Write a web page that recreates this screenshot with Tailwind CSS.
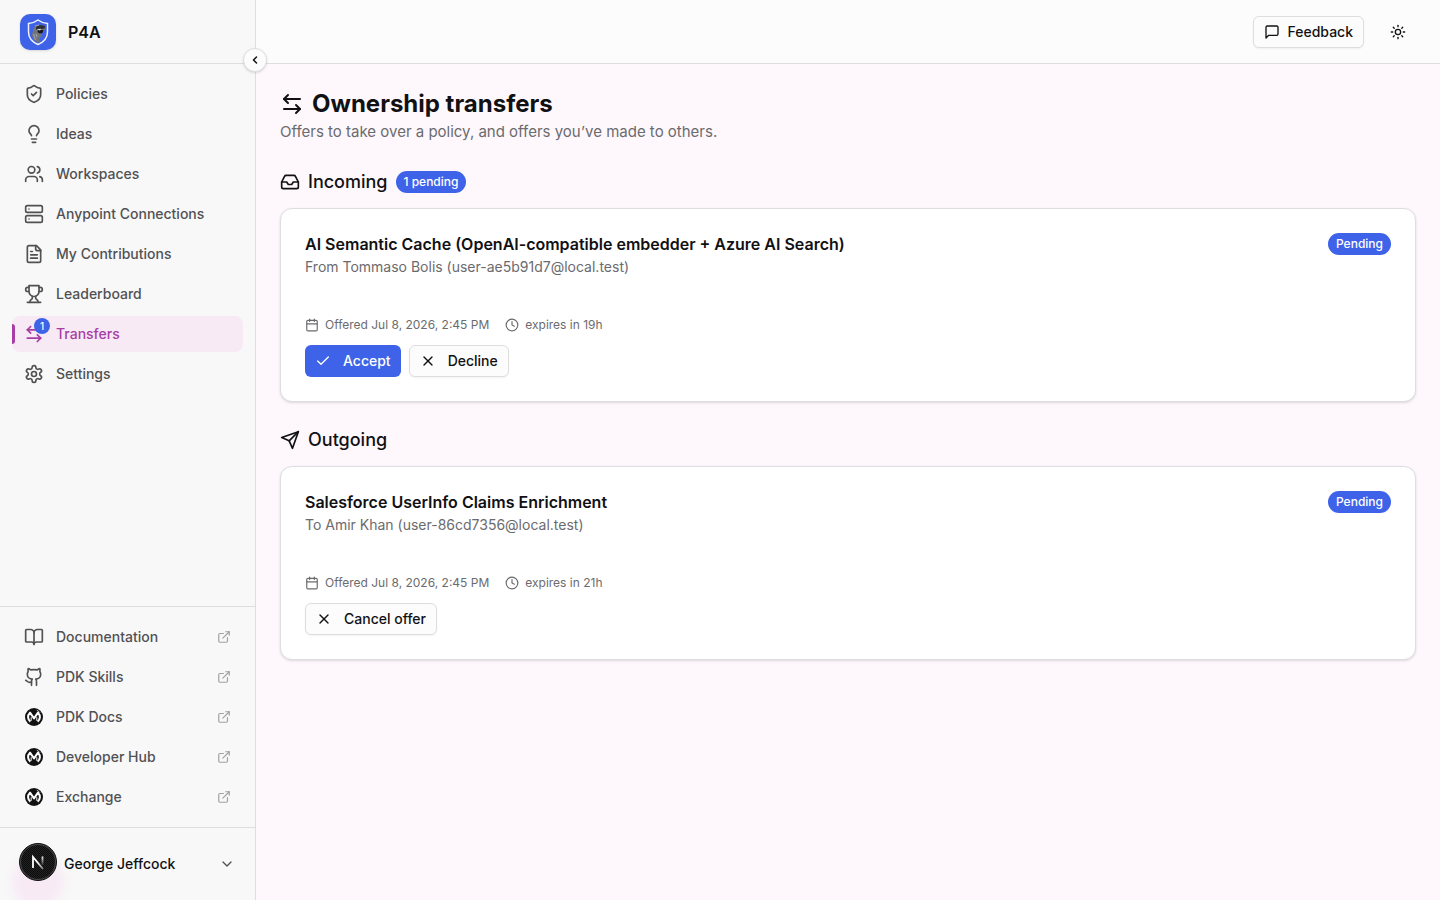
<!DOCTYPE html>
<html lang="en">
<head>
    <meta charset="UTF-8">
    <meta name="viewport" content="width=device-width, initial-scale=1.0">
    <title>Ownership transfers - P4A</title>
    <script src="https://cdn.jsdelivr.net/npm/@tailwindcss/browser@4"></script>
</head>
<body class="bg-[#fef8fc] font-['Inter','Liberation_Sans',sans-serif] text-[#111113] antialiased">
    <!-- Shared icons -->
    <svg class="hidden" xmlns="http://www.w3.org/2000/svg">
        <symbol id="transfer" viewBox="0 0 24 24">
            <path d="M8 3 4 7l4 4"/><path d="M4 7h16"/><path d="m16 21 4-4-4-4"/><path d="M20 17H4"/>
        </symbol>
        <symbol id="external" viewBox="0 0 24 24">
            <path d="M15 3h6v6"/><path d="M10 14 21 3"/><path d="M18 13v6a2 2 0 0 1-2 2H5a2 2 0 0 1-2-2V8a2 2 0 0 1 2-2h6"/>
        </symbol>
        <symbol id="calendar" viewBox="0 0 24 24">
            <path d="M8 2v4"/><path d="M16 2v4"/><rect width="18" height="18" x="3" y="4" rx="2"/><path d="M3 10h18"/>
        </symbol>
        <symbol id="clock" viewBox="0 0 24 24">
            <circle cx="12" cy="12" r="10"/><path d="M12 6v6l4 2"/>
        </symbol>
        <symbol id="close" viewBox="0 0 24 24">
            <path d="M18 6 6 18"/><path d="m6 6 12 12"/>
        </symbol>
        <symbol id="mulesoft" viewBox="0 0 20 20">
            <circle cx="10" cy="10" r="9" fill="#111113" stroke="none"/>
            <path d="M6.400 14.600C3.600 12.600 3.200 8.400 6 5.600L10 11.400l4-5.800c2.800 2.800 2.400 7-.4 9" fill="none" stroke="#fff" stroke-width="2" stroke-linejoin="round"/>
            <path d="M7.200 10.200v3.600M12.800 10.200v3.600" stroke="#fff" stroke-width="1"/>
            <path d="M12.800 3.200a8 8 0 0 1 3.200 2.500" fill="none" stroke="#fff" stroke-width=".7"/>
        </symbol>
    </svg>

    <div class="flex min-h-screen">
        <!-- Sidebar -->
        <aside class="relative flex w-64 shrink-0 flex-col border-r border-[#dedee0] bg-[#f8f8f8]">
            <div class="flex h-16 items-center gap-3 border-b border-[#dedee0] px-5">
                <svg class="size-9 rounded-[10px] bg-[#3e63e8] shadow-sm" viewBox="0 0 36 36" fill="none" aria-hidden="true">
                    <path d="M18 6c3 2.200 6 3.300 9.500 3.500V18c0 6-3.600 10-9.500 12.500C12.100 28 8.500 24 8.500 18V9.500C12 9.300 15 8.200 18 6Z" stroke="#eef0fa" stroke-width="1.500"/>
                    <path d="M13 17c0-3 2-5 5-5.500l5.500-.5 2 3-2 3.500-3 1.500 2 4-2.500 5-2 1c-4-2-6-5-6-9Z" fill="#73757a"/>
                    <path d="M16 13c2-1.800 6-2.300 8.500-1.200l.8 2.200-3 1-4.300-.3-2 1Z" fill="#2b2d32"/>
                    <path d="M18 16h5.500l-1 3-3 .5-2-1.500Z" fill="#17191d"/>
                    <path d="m17 15.500 4-.8-1 1.800Z" fill="#e8e8e8"/>
                    <path d="m13.500 20 2 6M16 20l1 3M15 12l4-1" stroke="#a4a6a8"/>
                    <path d="m19 25 2-3 1 3-2 3Z" fill="#3e63e8"/>
                </svg>
                <span class="text-base font-semibold">P4A</span>
            </div>
            <button type="button" aria-label="Collapse sidebar" class="absolute top-12 -right-3 z-10 flex size-6 items-center justify-center rounded-full border border-[#dedee0] bg-[#fcfcfc] shadow-sm">
                <svg class="size-3" viewBox="0 0 24 24" fill="none" stroke="currentColor" stroke-width="3" stroke-linecap="round" stroke-linejoin="round"><path d="m15 18-6-6 6-6"/></svg>
            </button>

            <nav class="flex flex-1 flex-col gap-1 p-3 text-sm font-medium text-[#515154]">
                <a href="#" class="flex h-9 items-center gap-3 rounded-lg px-3">
                    <svg class="size-5" viewBox="0 0 24 24" fill="none" stroke="currentColor" stroke-width="2" stroke-linecap="round" stroke-linejoin="round"><path d="M20 13c0 5-3.500 7.500-7.660 8.950a1 1 0 0 1-.67-.01C7.500 20.500 4 18 4 13V6a1 1 0 0 1 1-1c2 0 4.500-1.200 6.240-2.720a1.170 1.170 0 0 1 1.520 0C14.510 3.810 17 5 19 5a1 1 0 0 1 1 1z"/><path d="m9 12 2 2 4-4"/></svg>
                    Policies
                </a>
                <a href="#" class="flex h-9 items-center gap-3 rounded-lg px-3">
                    <svg class="size-5" viewBox="0 0 24 24" fill="none" stroke="currentColor" stroke-width="2" stroke-linecap="round" stroke-linejoin="round"><path d="M15 14c.2-1 .7-1.700 1.500-2.500 1-.9 1.500-2.200 1.500-3.500A6 6 0 0 0 6 8c0 1 .2 2.200 1.500 3.500.7.7 1.300 1.500 1.500 2.500"/><path d="M9 18h6"/><path d="M10 22h4"/></svg>
                    Ideas
                </a>
                <a href="#" class="flex h-9 items-center gap-3 rounded-lg px-3">
                    <svg class="size-5" viewBox="0 0 24 24" fill="none" stroke="currentColor" stroke-width="2" stroke-linecap="round" stroke-linejoin="round"><path d="M16 21v-2a4 4 0 0 0-4-4H6a4 4 0 0 0-4 4v2"/><circle cx="9" cy="7" r="4"/><path d="M22 21v-2a4 4 0 0 0-3-3.870"/><path d="M16 3.130a4 4 0 0 1 0 7.750"/></svg>
                    Workspaces
                </a>
                <a href="#" class="flex h-9 items-center gap-3 rounded-lg px-3">
                    <svg class="size-5" viewBox="0 0 24 24" fill="none" stroke="currentColor" stroke-width="2" stroke-linecap="round" stroke-linejoin="round"><rect width="20" height="8" x="2" y="2" rx="2"/><rect width="20" height="8" x="2" y="14" rx="2"/><path d="M6 6h.01"/><path d="M6 18h.01"/></svg>
                    Anypoint Connections
                </a>
                <a href="#" class="flex h-9 items-center gap-3 rounded-lg px-3">
                    <svg class="size-5" viewBox="0 0 24 24" fill="none" stroke="currentColor" stroke-width="2" stroke-linecap="round" stroke-linejoin="round"><path d="M15 2H6a2 2 0 0 0-2 2v16a2 2 0 0 0 2 2h12a2 2 0 0 0 2-2V7Z"/><path d="M14 2v4a2 2 0 0 0 2 2h4"/><path d="M10 9H8"/><path d="M16 13H8"/><path d="M16 17H8"/></svg>
                    My Contributions
                </a>
                <a href="#" class="flex h-9 items-center gap-3 rounded-lg px-3">
                    <svg class="size-5" viewBox="0 0 24 24" fill="none" stroke="currentColor" stroke-width="2" stroke-linecap="round" stroke-linejoin="round"><path d="M6 9H4.500a2.500 2.500 0 0 1 0-5H6"/><path d="M18 9h1.500a2.500 2.500 0 0 0 0-5H18"/><path d="M4 22h16"/><path d="M10 14.660V17c0 .55-.47.98-.97 1.210C7.850 18.750 7 20.240 7 22"/><path d="M14 14.660V17c0 .55.47.98.97 1.210C16.150 18.750 17 20.240 17 22"/><path d="M18 2H6v7a6 6 0 0 0 12 0V2Z"/></svg>
                    Leaderboard
                </a>
                <a href="#" aria-current="page" class="relative flex h-9 items-center gap-3 rounded-lg bg-[#f7eaf5] px-3 text-[#a83da5]">
                    <span class="absolute left-0 h-5 w-[3px] rounded-r-full bg-[#a83da5]"></span>
                    <span class="relative">
                        <svg class="size-5" fill="none" stroke="currentColor" stroke-width="2" stroke-linecap="round" stroke-linejoin="round"><use href="#transfer"/></svg>
                        <span class="absolute -top-1.5 -right-1.5 flex size-4 items-center justify-center rounded-full bg-[#3e63e8] text-[10px] text-white">1</span>
                    </span>
                    Transfers
                </a>
                <a href="#" class="flex h-9 items-center gap-3 rounded-lg px-3">
                    <svg class="size-5" viewBox="0 0 24 24" fill="none" stroke="currentColor" stroke-width="2" stroke-linecap="round" stroke-linejoin="round"><path d="M12.220 2h-.44a2 2 0 0 0-2 2v.18a2 2 0 0 1-1 1.730l-.43.25a2 2 0 0 1-2 0l-.15-.08a2 2 0 0 0-2.730.73l-.22.38a2 2 0 0 0 .73 2.730l.15.1a2 2 0 0 1 1 1.720v.51a2 2 0 0 1-1 1.740l-.15.09a2 2 0 0 0-.73 2.730l.22.38a2 2 0 0 0 2.730.73l.15-.08a2 2 0 0 1 2 0l.43.25a2 2 0 0 1 1 1.730V20a2 2 0 0 0 2 2h.44a2 2 0 0 0 2-2v-.18a2 2 0 0 1 1-1.730l.43-.25a2 2 0 0 1 2 0l.15.08a2 2 0 0 0 2.730-.73l.22-.39a2 2 0 0 0-.73-2.730l-.15-.08a2 2 0 0 1-1-1.740v-.5a2 2 0 0 1 1-1.740l.15-.09a2 2 0 0 0 .73-2.730l-.22-.38a2 2 0 0 0-2.730-.73l-.15.08a2 2 0 0 1-2 0l-.43-.25a2 2 0 0 1-1-1.730V4a2 2 0 0 0-2-2z"/><circle cx="12" cy="12" r="3"/></svg>
                    Settings
                </a>
            </nav>

            <!-- External links -->
            <div class="flex flex-col gap-1 border-t border-[#dedee0] p-3 text-sm font-medium text-[#515154]">
                <a href="#" class="flex h-9 items-center gap-3 rounded-lg px-3">
                    <svg class="size-5" viewBox="0 0 24 24" fill="none" stroke="currentColor" stroke-width="2" stroke-linecap="round" stroke-linejoin="round"><path d="M12 7v14"/><path d="M3 18a1 1 0 0 1-1-1V4a1 1 0 0 1 1-1h5a4 4 0 0 1 4 4 4 4 0 0 1 4-4h5a1 1 0 0 1 1 1v13a1 1 0 0 1-1 1h-6a3 3 0 0 0-3 3 3 3 0 0 0-3-3z"/></svg>
                    <span class="flex-1">Documentation</span>
                    <svg class="size-3.5 text-[#a0a0a2]" fill="none" stroke="currentColor" stroke-width="2" stroke-linecap="round" stroke-linejoin="round"><use href="#external"/></svg>
                </a>
                <a href="#" class="flex h-9 items-center gap-3 rounded-lg px-3">
                    <svg class="size-5" viewBox="0 0 24 24" fill="none" stroke="currentColor" stroke-width="2" stroke-linecap="round" stroke-linejoin="round"><path d="M15 22v-4a4.800 4.800 0 0 0-1-3.500c3 0 6-2 6-5.500.08-1.250-.27-2.480-1-3.500.28-1.150.28-2.350 0-3.500 0 0-1 0-3 1.500-2.640-.5-5.360-.5-8 0C6 2 5 2 5 2c-.3 1.150-.3 2.350 0 3.500A5.400 5.400 0 0 0 4 9c0 3.500 3 5.500 6 5.500-.39.49-.68 1.050-.85 1.650S8.930 17.380 9 18v4"/><path d="M9 18c-4.510 2-5-2-7-2"/></svg>
                    <span class="flex-1">PDK Skills</span>
                    <svg class="size-3.5 text-[#a0a0a2]" fill="none" stroke="currentColor" stroke-width="2" stroke-linecap="round" stroke-linejoin="round"><use href="#external"/></svg>
                </a>
                <a href="#" class="flex h-9 items-center gap-3 rounded-lg px-3">
                    <svg class="size-5"><use href="#mulesoft"/></svg>
                    <span class="flex-1">PDK Docs</span>
                    <svg class="size-3.5 text-[#a0a0a2]" fill="none" stroke="currentColor" stroke-width="2" stroke-linecap="round" stroke-linejoin="round"><use href="#external"/></svg>
                </a>
                <a href="#" class="flex h-9 items-center gap-3 rounded-lg px-3">
                    <svg class="size-5"><use href="#mulesoft"/></svg>
                    <span class="flex-1">Developer Hub</span>
                    <svg class="size-3.5 text-[#a0a0a2]" fill="none" stroke="currentColor" stroke-width="2" stroke-linecap="round" stroke-linejoin="round"><use href="#external"/></svg>
                </a>
                <a href="#" class="flex h-9 items-center gap-3 rounded-lg px-3">
                    <svg class="size-5"><use href="#mulesoft"/></svg>
                    <span class="flex-1">Exchange</span>
                    <svg class="size-3.5 text-[#a0a0a2]" fill="none" stroke="currentColor" stroke-width="2" stroke-linecap="round" stroke-linejoin="round"><use href="#external"/></svg>
                </a>
            </div>

            <!-- User menu -->
            <div class="relative overflow-hidden border-t border-[#dedee0] p-3">
                <span class="absolute -bottom-2 left-3 size-13 rounded-full bg-[#f7eaf5] blur-xs"></span>
                <button type="button" class="relative flex h-12 w-full items-center px-2 text-sm font-medium">
                    <span class="mr-3 size-8"></span>
                    <span class="flex-1 text-left">George Jeffcock</span>
                    <svg class="size-4 text-[#515154]" viewBox="0 0 24 24" fill="none" stroke="currentColor" stroke-width="2" stroke-linecap="round" stroke-linejoin="round"><path d="m6 9 6 6 6-6"/></svg>
                </button>
                <svg class="absolute top-[15px] left-[19px] size-[38px]" viewBox="0 0 38 38" fill="none" aria-hidden="true">
                    <defs>
                        <linearGradient id="stem" x1="0" y1="13" x2="0" y2="23" gradientUnits="userSpaceOnUse"><stop stop-color="#fff"/><stop offset="1" stop-color="#fff" stop-opacity="0"/></linearGradient>
                        <linearGradient id="slash" x1="19" y1="19" x2="25" y2="26" gradientUnits="userSpaceOnUse"><stop stop-color="#fff"/><stop offset="1" stop-color="#fff" stop-opacity=".4"/></linearGradient>
                        <pattern id="weave" width="2" height="2" patternUnits="userSpaceOnUse"><rect width="2" height="2" fill="#222"/><rect width="1" height="1" fill="#0c0c0c"/><rect x="1" y="1" width="1" height="1" fill="#0c0c0c"/></pattern>
                    </defs>
                    <circle cx="19" cy="19" r="18.500" fill="url(#weave)" stroke="#111"/>
                    <circle cx="19" cy="19" r="17.500" stroke="#4a4a4a"/>
                    <path d="M14 25V14l10 12" stroke="url(#slash)" stroke-width="1.800"/>
                    <path d="M23.500 13.500V22" stroke="url(#stem)" stroke-width="1.800"/>
                </svg>
            </div>
        </aside>

        <div class="flex min-w-0 flex-1 flex-col">
            <header class="flex h-16 items-center justify-end gap-4 border-b border-[#dedee0] bg-[#fcfcfc] px-6">
                <button type="button" class="flex h-8 items-center gap-2 rounded-md border border-[#dedee0] bg-[#fcfcfc] px-2.5 text-sm font-medium shadow-xs">
                    <svg class="size-4" viewBox="0 0 24 24" fill="none" stroke="currentColor" stroke-width="2" stroke-linecap="round" stroke-linejoin="round"><path d="M21 15a2 2 0 0 1-2 2H7l-4 4V5a2 2 0 0 1 2-2h14a2 2 0 0 1 2 2z"/></svg>
                    Feedback
                </button>
                <button type="button" aria-label="Toggle theme" class="flex size-9 items-center justify-center rounded-md">
                    <svg class="size-4" viewBox="0 0 24 24" fill="none" stroke="currentColor" stroke-width="2" stroke-linecap="round" stroke-linejoin="round"><circle cx="12" cy="12" r="4"/><path d="M12 2v2"/><path d="M12 20v2"/><path d="m4.930 4.930 1.410 1.410"/><path d="m17.660 17.660 1.410 1.410"/><path d="M2 12h2"/><path d="M20 12h2"/><path d="m6.340 17.660-1.410 1.410"/><path d="m19.070 4.930-1.410 1.410"/></svg>
                </button>
            </header>

            <main class="flex flex-col gap-6 p-6">
                <div>
                    <h1 class="flex items-center gap-2 text-2xl font-bold">
                        <svg class="size-6" fill="none" stroke="currentColor" stroke-width="2" stroke-linecap="round" stroke-linejoin="round"><use href="#transfer"/></svg>
                        Ownership transfers
                    </h1>
                    <p class="text-[15px] leading-6 text-[#6b6b6e]">Offers to take over a policy, and offers you’ve made to others.</p>
                </div>

                <!-- Incoming -->
                <section class="flex flex-col gap-3">
                    <div class="flex items-center gap-2">
                        <h2 class="flex items-center gap-2 text-lg font-medium">
                            <svg class="size-5" viewBox="0 0 24 24" fill="none" stroke="currentColor" stroke-width="2" stroke-linecap="round" stroke-linejoin="round"><path d="M22 12h-6l-2 3h-4l-2-3H2"/><path d="M5.450 5.110 2 12v6a2 2 0 0 0 2 2h16a2 2 0 0 0 2-2v-6l-3.450-6.890A2 2 0 0 0 16.760 4H7.240a2 2 0 0 0-1.790 1.110z"/></svg>
                            Incoming
                        </h2>
                        <span class="rounded-full bg-[#3e63e8] px-2 text-xs leading-[22px] font-medium text-white">1 pending</span>
                    </div>
                    <article class="rounded-xl border border-[#dedee0] bg-white p-6 shadow-sm">
                        <div class="flex items-start justify-between gap-4">
                            <div>
                                <h3 class="text-base leading-[22px] font-semibold">AI Semantic Cache (OpenAI-compatible embedder + Azure AI Search)</h3>
                                <p class="mt-0.5 text-sm text-[#6b6b6e]">From Tommaso Bolis (user-ae5b91d7@local.test)</p>
                            </div>
                            <span class="rounded-full bg-[#3e63e8] px-2 text-xs leading-[22px] font-medium text-white">Pending</span>
                        </div>
                        <div class="mt-10 flex items-center gap-4 text-xs text-[#6b6b6e]">
                            <span class="flex items-center gap-1.5"><svg class="size-3.5" fill="none" stroke="currentColor" stroke-width="2" stroke-linecap="round" stroke-linejoin="round"><use href="#calendar"/></svg>Offered Jul 8, 2026, 2:45 PM</span>
                            <span class="flex items-center gap-1.5"><svg class="size-3.5" fill="none" stroke="currentColor" stroke-width="2" stroke-linecap="round" stroke-linejoin="round"><use href="#clock"/></svg>expires in 19h</span>
                        </div>
                        <div class="mt-3 flex gap-2 text-sm font-medium">
                            <button type="button" class="flex h-8 items-center gap-3 rounded-md bg-[#3e63e8] px-2.5 text-white">
                                <svg class="size-4" viewBox="0 0 24 24" fill="none" stroke="currentColor" stroke-width="2" stroke-linecap="round" stroke-linejoin="round"><path d="M20 6 9 17l-5-5"/></svg>
                                Accept
                            </button>
                            <button type="button" class="flex h-8 items-center gap-3 rounded-md border border-[#dedee0] bg-[#fcfcfc] px-2.5 shadow-xs">
                                <svg class="size-4" fill="none" stroke="currentColor" stroke-width="2" stroke-linecap="round" stroke-linejoin="round"><use href="#close"/></svg>
                                Decline
                            </button>
                        </div>
                    </article>
                </section>

                <!-- Outgoing -->
                <section class="flex flex-col gap-3">
                    <h2 class="flex items-center gap-2 text-lg font-medium">
                        <svg class="size-5" viewBox="0 0 24 24" fill="none" stroke="currentColor" stroke-width="2" stroke-linecap="round" stroke-linejoin="round"><path d="m22 2-7 20-4-9-9-4Z"/><path d="M22 2 11 13"/></svg>
                        Outgoing
                    </h2>
                    <article class="rounded-xl border border-[#dedee0] bg-white p-6 shadow-sm">
                        <div class="flex items-start justify-between gap-4">
                            <div>
                                <h3 class="text-base leading-[22px] font-semibold">Salesforce UserInfo Claims Enrichment</h3>
                                <p class="mt-0.5 text-sm text-[#6b6b6e]">To Amir Khan (user-86cd7356@local.test)</p>
                            </div>
                            <span class="rounded-full bg-[#3e63e8] px-2 text-xs leading-[22px] font-medium text-white">Pending</span>
                        </div>
                        <div class="mt-10 flex items-center gap-4 text-xs text-[#6b6b6e]">
                            <span class="flex items-center gap-1.5"><svg class="size-3.5" fill="none" stroke="currentColor" stroke-width="2" stroke-linecap="round" stroke-linejoin="round"><use href="#calendar"/></svg>Offered Jul 8, 2026, 2:45 PM</span>
                            <span class="flex items-center gap-1.5"><svg class="size-3.5" fill="none" stroke="currentColor" stroke-width="2" stroke-linecap="round" stroke-linejoin="round"><use href="#clock"/></svg>expires in 21h</span>
                        </div>
                        <div class="mt-3 flex gap-2 text-sm font-medium">
                            <button type="button" class="flex h-8 items-center gap-3 rounded-md border border-[#dedee0] bg-[#fcfcfc] px-2.5 shadow-xs">
                                <svg class="size-4" fill="none" stroke="currentColor" stroke-width="2" stroke-linecap="round" stroke-linejoin="round"><use href="#close"/></svg>
                                Cancel offer
                            </button>
                        </div>
                    </article>
                </section>
            </main>
        </div>
    </div>
</body>
</html>
